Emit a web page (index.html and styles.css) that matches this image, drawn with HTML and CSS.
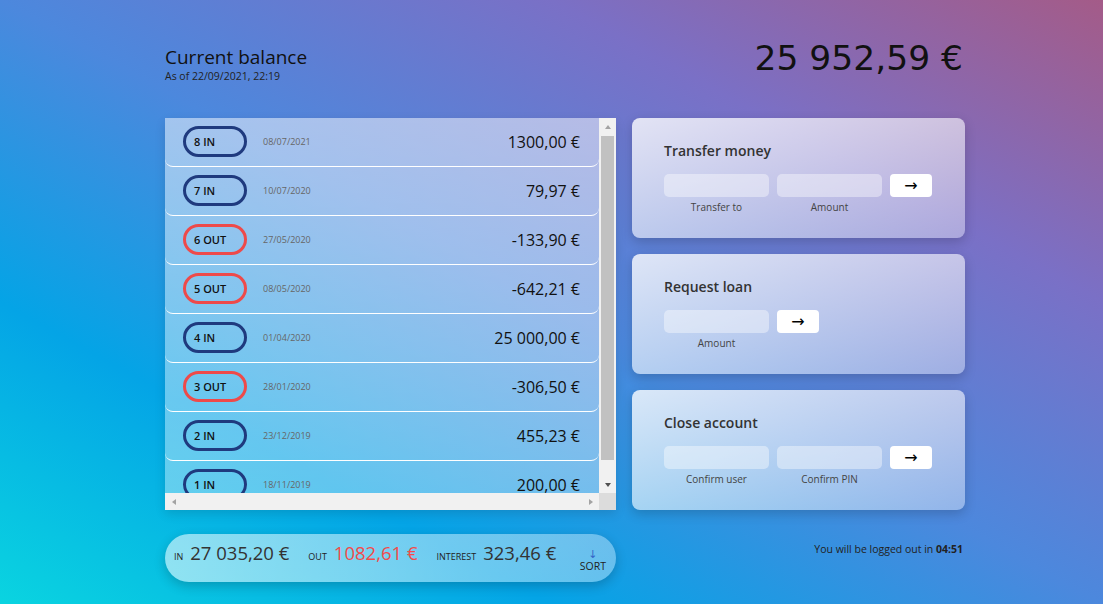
FILE: index.html
```html
<!DOCTYPE html>
<html lang="en">
<head>
<meta charset="utf-8">
<title>Bankist</title>
<link rel="stylesheet" href="styles.css">
</head>
<body>
<main class="app">
  <div class="balance">
    <div class="balance__info">
      <p class="balance__label">Current balance</p>
      <p class="balance__date">As of <span>22/09/2021, 22:19</span></p>
    </div>
    <p class="balance__value">25 952,59 €</p>
  </div>

  <div class="grid">
    <div class="movements">
      <div class="movements__list">
        <div class="movements__row">
          <div class="movements__type movements__type--deposit">8 in</div>
          <div class="movements__date">08/07/2021</div>
          <div class="movements__value">1300,00 €</div>
        </div>
        <div class="movements__row">
          <div class="movements__type movements__type--deposit">7 in</div>
          <div class="movements__date">10/07/2020</div>
          <div class="movements__value">79,97 €</div>
        </div>
        <div class="movements__row">
          <div class="movements__type movements__type--withdrawal">6 out</div>
          <div class="movements__date">27/05/2020</div>
          <div class="movements__value">-133,90 €</div>
        </div>
        <div class="movements__row">
          <div class="movements__type movements__type--withdrawal">5 out</div>
          <div class="movements__date">08/05/2020</div>
          <div class="movements__value">-642,21 €</div>
        </div>
        <div class="movements__row">
          <div class="movements__type movements__type--deposit">4 in</div>
          <div class="movements__date">01/04/2020</div>
          <div class="movements__value">25 000,00 €</div>
        </div>
        <div class="movements__row">
          <div class="movements__type movements__type--withdrawal">3 out</div>
          <div class="movements__date">28/01/2020</div>
          <div class="movements__value">-306,50 €</div>
        </div>
        <div class="movements__row">
          <div class="movements__type movements__type--deposit">2 in</div>
          <div class="movements__date">23/12/2019</div>
          <div class="movements__value">455,23 €</div>
        </div>
        <div class="movements__row">
          <div class="movements__type movements__type--deposit">1 in</div>
          <div class="movements__date">18/11/2019</div>
          <div class="movements__value">200,00 €</div>
        </div>
      </div>
      <div class="scrollbar scrollbar--v">
        <span class="sb-btn"><span class="tri tri--up"></span></span>
        <span class="sb-track"><span class="sb-thumb"></span></span>
        <span class="sb-btn"><span class="tri tri--down"></span></span>
      </div>
      <div class="scrollbar scrollbar--h">
        <span class="sb-btn"><span class="tri tri--left"></span></span>
        <span class="sb-track"></span>
        <span class="sb-btn"><span class="tri tri--right"></span></span>
      </div>
      <div class="scrollbar-corner"></div>
    </div>

    <div class="operation operation--transfer">
      <h2 class="operation__title">Transfer money</h2>
      <form class="form form--3">
        <input type="text" class="form__input">
        <input type="number" class="form__input">
        <button type="button" class="form__btn">&rarr;</button>
        <label class="form__label">Transfer to</label>
        <label class="form__label">Amount</label>
      </form>
    </div>

    <div class="operation operation--loan">
      <h2 class="operation__title">Request loan</h2>
      <form class="form form--2">
        <input type="number" class="form__input">
        <button type="button" class="form__btn">&rarr;</button>
        <label class="form__label">Amount</label>
      </form>
    </div>

    <div class="operation operation--close">
      <h2 class="operation__title">Close account</h2>
      <form class="form form--3">
        <input type="text" class="form__input">
        <input type="password" class="form__input">
        <button type="button" class="form__btn">&rarr;</button>
        <label class="form__label">Confirm user</label>
        <label class="form__label">Confirm PIN</label>
      </form>
    </div>

    <div class="summary">
      <p class="summary__label">In</p>
      <p class="summary__value">27 035,20 €</p>
      <p class="summary__label">Out</p>
      <p class="summary__value summary__value--out">1082,61 €</p>
      <p class="summary__label">Interest</p>
      <p class="summary__value">323,46 €</p>
      <button type="button" class="btn--sort"><span class="btn--sort__arrow">&darr;</span><span class="btn--sort__text">SORT</span></button>
    </div>

    <p class="logout-timer">You will be logged out in <span class="timer">04:51</span></p>
  </div>
</main>
</body>
</html>
```

FILE: styles.css
```css
* {
  margin: 0;
  padding: 0;
  box-sizing: border-box;
}

html, body {
  height: 100%;
}

body {
  font-family: "Open Sans", "Noto Sans", sans-serif;
  color: #444;
  background: linear-gradient(to top right, #0ad4e0 0%, #04a4e6 25%, #4c88dd 50%, #7a70c6 75%, #a45b88 100%);
  overflow: hidden;
}

.app {
  width: 800px;
  margin-left: 165px;
  padding-top: 39px;
}

/* BALANCE */
.balance {
  height: 79px;
  display: flex;
  justify-content: space-between;
  align-items: flex-start;
}

.balance__info {
  padding-top: 6px;
}

.balance__label {
  font-size: 19px;
  font-weight: 500;
  line-height: 24px;
  color: #111;
}

.balance__date {
  font-size: 10.5px;
  line-height: 15px;
  color: #222;
}

.balance__value {
  font-family: "DejaVu Sans", sans-serif;
  font-size: 34.5px;
  line-height: 36px;
  color: #111;
  margin-top: 1px;
  margin-right: 2px;
}

/* GRID */
.grid {
  display: grid;
  grid-template-columns: 451px 333px;
  grid-template-rows: 120px 120px 120px auto;
  column-gap: 16px;
  row-gap: 16px;
}

/* MOVEMENTS */
.movements {
  grid-column: 1;
  grid-row: 1 / span 3;
  display: grid;
  grid-template-columns: 1fr 17px;
  grid-template-rows: 1fr 17px;
  overflow: hidden;
  background: linear-gradient(to bottom, rgba(255, 255, 255, 0.5), rgba(255, 255, 255, 0.36));
  box-shadow: 0 4px 10px rgba(0, 0, 0, 0.12);
}

.movements__list {
  overflow: hidden;
  min-height: 0;
}

.movements__row {
  display: flex;
  align-items: center;
  padding: 8px 19px 9px 18px;
  border-bottom: 1px solid #fff;
  border-radius: 8px;
}

.movements__type {
  flex-shrink: 0;
  width: 64px;
  height: 31px;
  border: 3px solid;
  border-radius: 16px;
  padding-left: 8px;
  font-size: 11px;
  font-weight: 600;
  line-height: 25px;
  text-transform: uppercase;
  color: #111;
}

.movements__type--deposit {
  border-color: #1f3a7e;
}

.movements__type--withdrawal {
  border-color: #ee4a4a;
}

.movements__date {
  margin-left: 16px;
  font-size: 9px;
  color: #666;
}

.movements__value {
  margin-left: auto;
  font-size: 16px;
  color: #111;
  white-space: nowrap;
}

/* SCROLLBARS */
.scrollbar {
  background: #f1f1f1;
  display: flex;
}

.scrollbar--v {
  flex-direction: column;
}

.sb-btn {
  width: 17px;
  height: 17px;
  flex-shrink: 0;
  display: flex;
  align-items: center;
  justify-content: center;
}

.sb-track {
  flex: 1;
  display: flex;
  flex-direction: column;
  align-items: center;
}

.sb-thumb {
  width: 13px;
  height: 324px;
  margin-top: 1px;
  background: #c1c1c1;
}

.scrollbar-corner {
  background: #dcdcdc;
}

.tri {
  width: 0;
  height: 0;
}

.tri--up {
  border-left: 3.5px solid transparent;
  border-right: 3.5px solid transparent;
  border-bottom: 4px solid #a3a3a3;
}

.tri--down {
  border-left: 3.5px solid transparent;
  border-right: 3.5px solid transparent;
  border-top: 4px solid #505050;
}

.tri--left {
  border-top: 3.5px solid transparent;
  border-bottom: 3.5px solid transparent;
  border-right: 4px solid #a3a3a3;
}

.tri--right {
  border-top: 3.5px solid transparent;
  border-bottom: 3.5px solid transparent;
  border-left: 4px solid #a3a3a3;
}

/* OPERATIONS */
.operation {
  grid-column: 2;
  border-radius: 8px;
  padding: 23px 32px 0;
  background: linear-gradient(to bottom right, rgba(255, 255, 255, 0.8), rgba(255, 255, 255, 0.38));
  box-shadow: 0 4px 12px rgba(0, 0, 0, 0.18);
}

.operation__title {
  font-size: 14px;
  font-weight: 600;
  line-height: 20px;
  color: #333;
  margin-bottom: 13px;
}

.form {
  display: grid;
  column-gap: 8px;
  row-gap: 3px;
}

.form--3 {
  grid-template-columns: 105px 105px 42px;
}

.form--2 {
  grid-template-columns: 105px 42px;
}

.form__input {
  height: 23px;
  border: none;
  border-radius: 5px;
  background: rgba(255, 255, 255, 0.4);
  font-family: inherit;
  outline: none;
}

.form__btn {
  height: 23px;
  border: none;
  border-radius: 4px;
  background: #fff;
  color: #000;
  font-size: 16px;
  line-height: 23px;
  font-family: "DejaVu Sans", sans-serif;
}

.form__label {
  font-size: 10px;
  line-height: 14px;
  text-align: center;
  color: #444;
}

/* SUMMARY */
.summary {
  grid-column: 1;
  margin-top: 8px;
  height: 48px;
  border-radius: 24px;
  padding: 0 10px 10px 9px;
  display: flex;
  align-items: baseline;
  background: linear-gradient(to right, rgba(255, 255, 255, 0.55), rgba(255, 255, 255, 0.35));
  box-shadow: 0 4px 12px rgba(0, 0, 0, 0.2);
}

.summary__label {
  flex-shrink: 0;
  font-size: 9px;
  font-weight: 500;
  text-transform: uppercase;
  color: #222;
  margin-right: 7px;
  line-height: 38px;
  white-space: nowrap;
}

.summary__value {
  flex-shrink: 0;
  font-size: 18.5px;
  color: #333;
  margin-right: 19px;
  line-height: 38px;
  white-space: nowrap;
}

.summary__value--out {
  color: #f24b4b;
}

.btn--sort {
  margin-left: auto;
  align-self: flex-end;
  margin-bottom: 1px;
  border: none;
  background: none;
  display: flex;
  flex-direction: column;
  align-items: center;
  font-family: inherit;
  color: #222;
}

.btn--sort__arrow {
  display: block;
  font-family: "DejaVu Sans", sans-serif;
  color: #3466c8;
  font-size: 11px;
  line-height: 12px;
}

.btn--sort__text {
  display: block;
  font-size: 10.5px;
  line-height: 10px;
}

/* LOGOUT */
.logout-timer {
  grid-column: 2;
  align-self: start;
  margin-top: 16px;
  padding-right: 2px;
  text-align: right;
  font-size: 10.5px;
  color: #222;
}

.timer {
  font-weight: 700;
}
```
